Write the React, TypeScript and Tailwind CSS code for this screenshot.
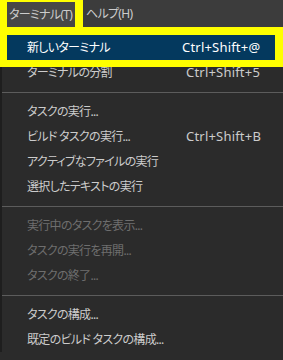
import React from "react";

const font = "font-['Noto_Sans','Noto_Sans_CJK_JP',sans-serif] [font-feature-settings:'palt']";
const jp = "text-[12px] tracking-[-0.7px]";
const sc = "text-[13px] tracking-[0.2px]";

type Item = { label: string; shortcut?: string; disabled?: boolean };

function Row({ item }: { item: Item }) {
  return (
    <div className="flex h-[25px] items-center pl-[25px] leading-none">
      <span className={`w-[159px] shrink-0 whitespace-nowrap ${jp} ${item.disabled ? "text-[#6e6e6e]" : "text-[#cccccc]"}`}>
        {item.label}
      </span>
      {item.shortcut && <span className={`whitespace-nowrap text-[#cccccc] ${sc}`}>{item.shortcut}</span>}
    </div>
  );
}

function Sep() {
  return <div className="mt-[7px] mb-[6px] h-px bg-[#5c5c5c]" />;
}

export default function App() {
  return (
    <div className={`relative h-[360px] w-[283px] overflow-hidden bg-[#2b2b2b] ${font}`}>
      {/* menubar */}
      <div className={`flex h-[27px] items-stretch bg-[#3c3c3c] leading-none text-[#cccccc] ${jp}`}>
        <div className="flex w-[83px] shrink-0 pl-[7px] pt-[2px] pr-[8px]">
          <div className="flex flex-1 items-center whitespace-nowrap bg-[#474747] pl-[2px]">ターミナル(T)</div>
        </div>
        <div className="flex items-center whitespace-nowrap pl-[3px]">ヘルプ(H)</div>
      </div>
      {/* menu panel */}
      <div className="flex">
        <div className="w-[2px] shrink-0 bg-[#1e1e1e]" />
        <div className="flex-1 pt-[8px]">
          <div className="ml-[5px] mr-[6px] flex h-[25px] items-center bg-[#04395e] pl-[20px] leading-none text-white">
            <span className={`w-[155px] shrink-0 whitespace-nowrap ${jp}`}>新しいターミナル</span>
            <span className={`whitespace-nowrap ${sc}`}>Ctrl+Shift+@</span>
          </div>
          <Row item={{ label: "ターミナルの分割", shortcut: "Ctrl+Shift+5" }} />
          <Sep />
          <Row item={{ label: "タスクの実行..." }} />
          <Row item={{ label: "ビルド タスクの実行...", shortcut: "Ctrl+Shift+B" }} />
          <Row item={{ label: "アクティブなファイルの実行" }} />
          <Row item={{ label: "選択したテキストの実行" }} />
          <Sep />
          <Row item={{ label: "実行中のタスクを表示...", disabled: true }} />
          <Row item={{ label: "タスクの実行を再開...", disabled: true }} />
          <Row item={{ label: "タスクの終了...", disabled: true }} />
          <Sep />
          <Row item={{ label: "タスクの構成..." }} />
          <Row item={{ label: "既定のビルド タスクの構成..." }} />
        </div>
      </div>
      {/* yellow annotation boxes */}
      <div className="pointer-events-none absolute left-0 top-0 h-[35px] w-[83px] border-solid border-[#ffff00] border-t-[2px] border-l-[7px] border-r-[8px] border-b-0" />
      <div className="pointer-events-none absolute left-0 top-[27px] h-[40px] w-[283px] border-solid border-[#ffff00] border-t-[8px] border-l-[7px] border-r-[8px] border-b-[7px]" />
    </div>
  );
}
